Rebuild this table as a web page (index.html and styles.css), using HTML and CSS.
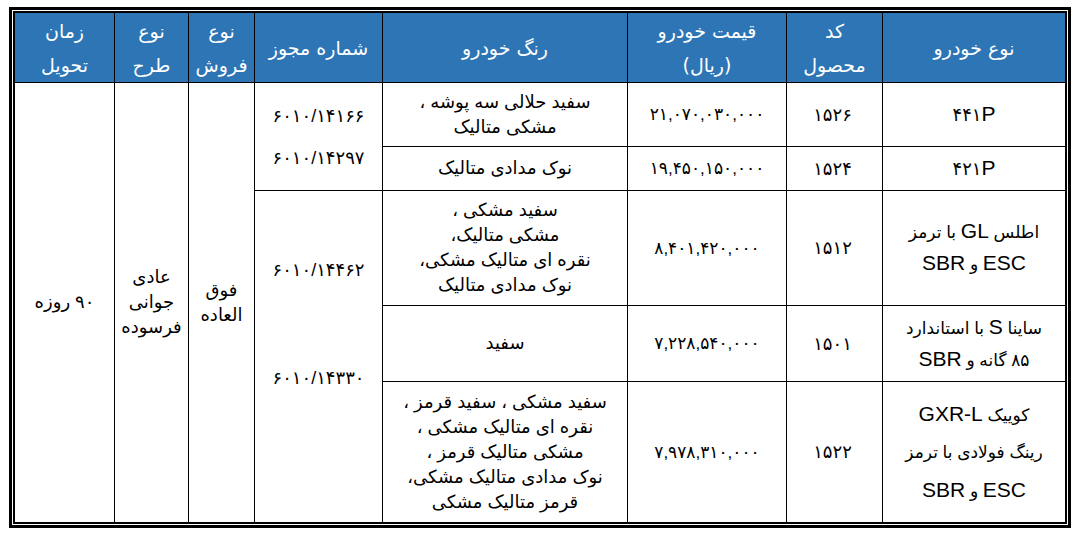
FILE: index.html
```html
<!DOCTYPE html>
<html lang="fa">
<head>
<meta charset="utf-8">
<title>جدول قیمت خودرو</title>
<link rel="stylesheet" href="styles.css">
</head>
<body>
<div class="frame">
<table class="price-table" dir="rtl">
<thead>
<tr class="row-head">
<th class="w-model">نوع خودرو</th>
<th class="w-code">کد<br>محصول</th>
<th class="w-price">قیمت خودرو<br>(ریال)</th>
<th class="w-color">رنگ خودرو</th>
<th class="w-permit">شماره مجوز</th>
<th class="w-sale">نوع<br>فروش</th>
<th class="w-plan">نوع<br>طرح</th>
<th class="w-time last">زمان<br>تحویل</th>
</tr>
</thead>
<tbody>
<tr class="row-1">
<td class="model"><span class="digits">۴۴۱</span><span class="lat">P</span></td>
<td class="code">۱۵۲۶</td>
<td class="price">۲۱,۰۷۰,۰۳۰,۰۰۰</td>
<td class="color">سفید حلالی سه پوشه ،<br>مشکی متالیک</td>
<td class="permit permit-a" rowspan="2"><div>۶۰۱۰/۱۴۱۶۶</div><div>۶۰۱۰/۱۴۲۹۷</div></td>
<td class="stack" rowspan="5">فوق<br>العاده</td>
<td class="stack" rowspan="5">عادی<br>جوانی<br>فرسوده</td>
<td class="stack last" rowspan="5">۹۰ روزه</td>
</tr>
<tr class="row-2">
<td class="model"><span class="digits">۴۲۱</span><span class="lat">P</span></td>
<td class="code">۱۵۲۴</td>
<td class="price">۱۹,۴۵۰,۱۵۰,۰۰۰</td>
<td class="color">نوک مدادی متالیک</td>
</tr>
<tr class="row-3">
<td class="model">اطلس <span class="lat">GL</span> با ترمز<br><span class="lat">ESC</span> و <span class="lat">SBR</span></td>
<td class="code">۱۵۱۲</td>
<td class="price">۸,۴۰۱,۴۲۰,۰۰۰</td>
<td class="color">سفید مشکی ،<br>مشکی متالیک،<br>نقره ای متالیک مشکی،<br>نوک مدادی متالیک</td>
<td class="permit permit-b" rowspan="3"><div>۶۰۱۰/۱۴۴۶۲</div><div class="permit-second">۶۰۱۰/۱۴۳۳۰</div></td>
</tr>
<tr class="row-4">
<td class="model">ساینا <span class="lat">S</span> با استاندارد<br>۸۵ گانه و <span class="lat">SBR</span></td>
<td class="code">۱۵۰۱</td>
<td class="price">۷,۲۲۸,۵۴۰,۰۰۰</td>
<td class="color">سفید</td>
</tr>
<tr class="row-5">
<td class="model model-tall">کوییک <span class="lat">GXR-L</span><br>رینگ فولادی با ترمز<br><span class="lat">ESC</span> و <span class="lat">SBR</span></td>
<td class="code">۱۵۲۲</td>
<td class="price">۷,۹۷۸,۳۱۰,۰۰۰</td>
<td class="color">سفید مشکی ، سفید قرمز ،<br>نقره ای متالیک مشکی ،<br>مشکی متالیک قرمز ،<br>نوک مدادی متالیک مشکی،<br>قرمز متالیک مشکی</td>
</tr>
</tbody>
</table>
</div>
</body>
</html>
```

FILE: styles.css
```css
html, body {
  margin: 0;
  padding: 0;
  background: #ffffff;
}

.frame {
  margin: 7px 0 0 9px;
  width: 1062px;
  box-sizing: border-box;
  border: 3px solid #000;
  padding: 1px;
}

.price-table {
  width: 100%;
  table-layout: fixed;
  border-collapse: separate;
  border-spacing: 0;
  border: 2px solid #000;
  font-family: "Liberation Sans", "DejaVu Sans", sans-serif;
  font-size: 18px;
  color: #000;
}

.price-table th,
.price-table td {
  box-sizing: border-box;
  border-left: 1px solid #000;
  border-top: 1px solid #000;
  text-align: center;
  vertical-align: middle;
  padding: 0 3px;
  font-weight: normal;
}

.price-table th {
  border-top: 0;
  background: #2e75b6;
  color: #ffffff;
  font-family: "DejaVu Sans", sans-serif;
  font-size: 19px;
  line-height: 34px;
}

.price-table .last {
  border-left: 0;
}

.w-model { width: 183px; }
.w-code { width: 96px; }
.w-price { width: 159px; }
.w-color { width: 245px; }
.w-permit { width: 128px; }
.w-sale { width: 66px; }
.w-plan { width: 74px; }
.w-time { width: 99px; }

.row-head { height: 69px; }
.row-1 { height: 64px; }
.row-2 { height: 44px; }
.row-3 { height: 115px; }
.row-4 { height: 76px; }
.row-5 { height: 141px; }

.digits {
  font-size: 18px;
  letter-spacing: 3px;
}

.code {
  font-size: 18px;
  letter-spacing: 4px;
  text-indent: 4px;
}

.price {
  font-size: 17px;
  letter-spacing: 2.5px;
}

.lat {
  font-family: "Liberation Sans", Arial, sans-serif;
  font-size: 21px;
  letter-spacing: 0;
}

.model {
  font-size: 17px;
  line-height: 30px;
}

.model-tall {
  line-height: 37px;
}

.color {
  font-size: 18px;
  line-height: 25px;
}

.stack {
  font-size: 18px;
  line-height: 25px;
}

.permit {
  font-size: 18px;
  letter-spacing: 2px;
}

.permit-a {
  line-height: 42px;
}

.price-table .permit-b {
  vertical-align: top;
  padding-top: 66px;
  line-height: 27px;
}

.permit-second {
  margin-top: 81px;
}
```
